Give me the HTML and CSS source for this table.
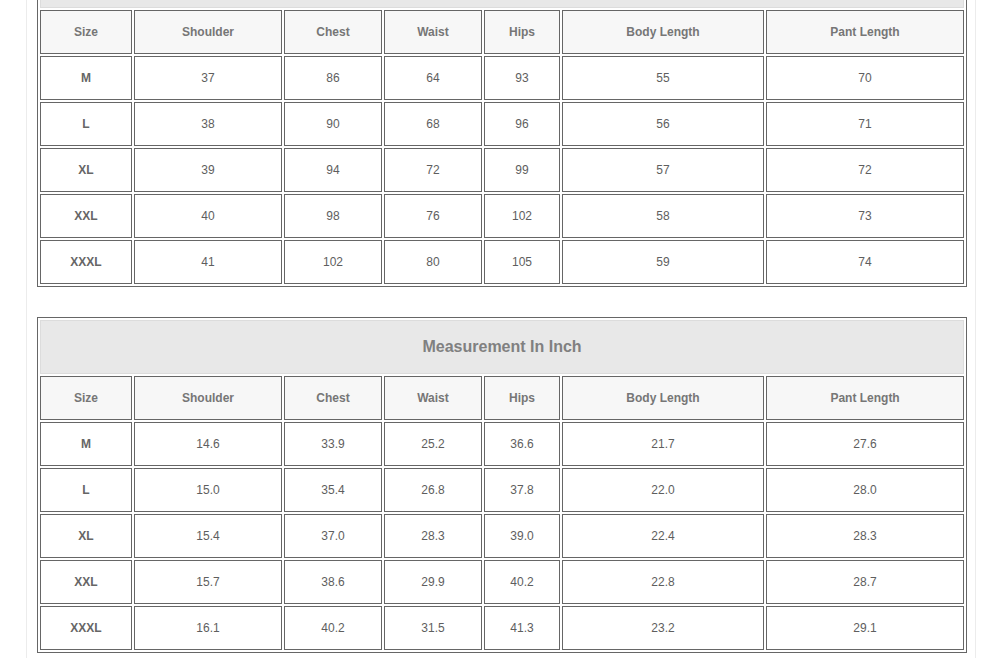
FILE: index.html
```html
<!DOCTYPE html>
<html>
<head>
<meta charset="utf-8">
<link rel="stylesheet" href="styles.css">
</head>
<body>
<div class="page">
  <div class="panel">
    <table class="size-table">
      <colgroup>
        <col class="c-size"><col class="c-shoulder"><col class="c-chest"><col class="c-waist"><col class="c-hips"><col class="c-body"><col class="c-pant">
      </colgroup>
      <tr><td class="title" colspan="7">Measurement In CM</td></tr>
      <tr class="head"><th>Size</th><th>Shoulder</th><th>Chest</th><th>Waist</th><th>Hips</th><th>Body Length</th><th>Pant Length</th></tr>
      <tr><th class="sz">M</th><td>37</td><td>86</td><td>64</td><td>93</td><td>55</td><td>70</td></tr>
      <tr><th class="sz">L</th><td>38</td><td>90</td><td>68</td><td>96</td><td>56</td><td>71</td></tr>
      <tr><th class="sz">XL</th><td>39</td><td>94</td><td>72</td><td>99</td><td>57</td><td>72</td></tr>
      <tr><th class="sz">XXL</th><td>40</td><td>98</td><td>76</td><td>102</td><td>58</td><td>73</td></tr>
      <tr><th class="sz">XXXL</th><td>41</td><td>102</td><td>80</td><td>105</td><td>59</td><td>74</td></tr>
    </table>

    <table class="size-table">
      <colgroup>
        <col class="c-size"><col class="c-shoulder"><col class="c-chest"><col class="c-waist"><col class="c-hips"><col class="c-body"><col class="c-pant">
      </colgroup>
      <tr><td class="title" colspan="7">Measurement In Inch</td></tr>
      <tr class="head"><th>Size</th><th>Shoulder</th><th>Chest</th><th>Waist</th><th>Hips</th><th>Body Length</th><th>Pant Length</th></tr>
      <tr><th class="sz">M</th><td>14.6</td><td>33.9</td><td>25.2</td><td>36.6</td><td>21.7</td><td>27.6</td></tr>
      <tr><th class="sz">L</th><td>15.0</td><td>35.4</td><td>26.8</td><td>37.8</td><td>22.0</td><td>28.0</td></tr>
      <tr><th class="sz">XL</th><td>15.4</td><td>37.0</td><td>28.3</td><td>39.0</td><td>22.4</td><td>28.3</td></tr>
      <tr><th class="sz">XXL</th><td>15.7</td><td>38.6</td><td>29.9</td><td>40.2</td><td>22.8</td><td>28.7</td></tr>
      <tr><th class="sz">XXXL</th><td>16.1</td><td>40.2</td><td>31.5</td><td>41.3</td><td>23.2</td><td>29.1</td></tr>
    </table>
  </div>
</div>
</body>
</html>
```
FILE: styles.css
```css
html, body {
  margin: 0;
  padding: 0;
  background: #fff;
}
body {
  font-family: Arial, "Liberation Sans", Helvetica, sans-serif;
  overflow: hidden;
}
.page {
  padding-left: 26px;
}
.panel {
  width: 950px;
  border-left: 1px solid #ececec;
  border-right: 1px solid #ececec;
  margin-top: -49px;
  padding: 0 10px 40px 10px;
  box-sizing: border-box;
  display: flex;
  flex-direction: column;
  gap: 30px;
}
.size-table {
  width: 930px;
  table-layout: fixed;
  border-collapse: separate;
  border-spacing: 2px;
  border: 1px solid #666;
  font-size: 12px;
  color: #5e5e5e;
}
.c-size { width: 92px; }
.c-shoulder { width: 148px; }
.c-chest { width: 98px; }
.c-waist { width: 98px; }
.c-hips { width: 76px; }
.c-body { width: 202px; }
.c-pant { width: 198px; }

.size-table td,
.size-table th {
  box-sizing: border-box;
  height: 44px;
  padding: 0;
  border: 1px solid #666;
  text-align: center;
  vertical-align: middle;
  font-weight: normal;
}
.size-table .title {
  height: 54px;
  background: #e8e8e8;
  border: 1px solid #dcdcdc;
  font-size: 16px;
  font-weight: bold;
  color: #808080;
}
.size-table .head th {
  background: #f7f7f7;
  font-weight: bold;
  color: #767676;
}
.size-table th.sz {
  font-weight: bold;
  color: #666;
}
```
